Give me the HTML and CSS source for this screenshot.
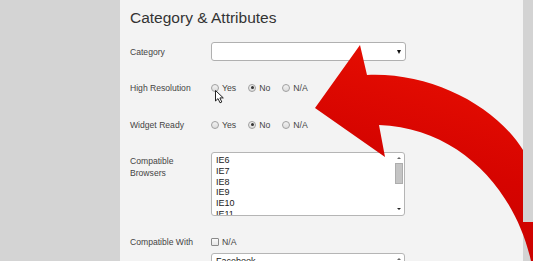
FILE: index.html
```html
<!DOCTYPE html>
<html>
<head>
<meta charset="utf-8">
<link rel="stylesheet" href="styles.css">
</head>
<body>
<div class="page">
  <div class="gutter"></div>
  <div class="panel">
    <h1 class="title">Category &amp; Attributes</h1>

    <div class="row row-cat">
      <div class="label">Category</div>
      <div class="select"><span class="caret"></span></div>
    </div>

    <div class="row row-radio row-hr">
      <div class="label">High Resolution</div>
      <div class="radios">
        <span class="opt"><span class="radio"></span>Yes</span>
        <span class="opt"><span class="radio checked"></span>No</span>
        <span class="opt"><span class="radio"></span>N/A</span>
      </div>
    </div>

    <div class="row row-radio row-wr">
      <div class="label">Widget Ready</div>
      <div class="radios">
        <span class="opt"><span class="radio"></span>Yes</span>
        <span class="opt"><span class="radio checked"></span>No</span>
        <span class="opt"><span class="radio"></span>N/A</span>
      </div>
    </div>

    <div class="row row-top row-browsers">
      <div class="label label-top">Compatible<br>Browsers</div>
      <div class="listbox">
        <div class="items">
          <div>IE6</div>
          <div>IE7</div>
          <div>IE8</div>
          <div>IE9</div>
          <div>IE10</div>
          <div>IE11</div>
        </div>
        <div class="scrollbar">
          <span class="sb-up"></span>
          <span class="sb-thumb"></span>
          <span class="sb-fill"></span>
          <span class="sb-down"></span>
        </div>
      </div>
    </div>

    <div class="row row-top row-with">
      <div class="label label-with">Compatible With</div>
      <div class="control-col">
        <div class="checkline"><span class="checkbox"></span>N/A</div>
        <div class="listbox listbox-fb">
          <div class="items"><div>Facebook</div><div>Twitter</div></div>
          <div class="scrollbar"><span class="sb-up"></span></div>
        </div>
      </div>
    </div>
  </div>
  <div class="strip"></div>

  <svg class="arrow" width="533" height="261" viewBox="0 0 533 261">
    <defs>
      <linearGradient id="red" x1="0.55" y1="0" x2="0.25" y2="1">
        <stop offset="0" stop-color="#e80f02"/>
        <stop offset="0.5" stop-color="#d60400"/>
        <stop offset="1" stop-color="#c50000"/>
      </linearGradient>
    </defs>
    <path fill="url(#red)" d="M315 108 L360 45 L367 75 C430 72 495 105 523 150 L523 222 L545 222 L545 261 L531 261 C515 190 460 128 379 125 L385 157 Z"/>
  </svg>

  <svg class="cursor" width="11" height="14" viewBox="0 0 11 14">
    <path d="M0.5 0.5 L0.5 11 L3 8.6 L5 12.8 L6.8 12 L4.9 7.9 L8.3 7.9 Z" fill="#fff" stroke="#222" stroke-width="1" stroke-linejoin="round"/>
  </svg>
</div>
</body>
</html>
```

FILE: styles.css
```css
html, body {
  margin: 0;
  padding: 0;
}

body {
  background: #d4d4d4;
  font-family: "Liberation Sans", Arial, sans-serif;
  overflow: hidden;
}

.page {
  position: relative;
  display: flex;
  width: 533px;
  height: 261px;
  overflow: hidden;
}

.gutter {
  width: 120px;
  flex: none;
  background: #d4d4d4;
}

.panel {
  width: 393px;
  flex: none;
  padding-left: 10px;
  background: #f3f3f3;
}

.strip {
  flex: 1;
  background: #d3d3d3;
}

.title {
  margin: 0;
  padding-top: 9px;
  font-size: 15.5px;
  line-height: 18px;
  font-weight: normal;
  color: #333;
}

.row {
  display: flex;
  align-items: center;
  min-height: 19px;
}

.row-top {
  align-items: flex-start;
}

.row-cat { margin-top: 15px; }
.row-hr { margin-top: 17px; }
.row-wr { margin-top: 18px; }
.row-browsers { margin-top: 18px; }
.row-with { margin-top: 18px; }

.label {
  width: 81px;
  flex: none;
  font-size: 8.6px;
  line-height: 12px;
  color: #444;
}

.label-top {
  padding-top: 3px;
}

.label-with {
  padding-top: 1.5px;
}

.select {
  width: 192px;
  height: 17px;
  border: 1px solid #b0b0b0;
  border-radius: 3px;
  background: #fff;
  display: flex;
  align-items: center;
  justify-content: flex-end;
  padding-right: 1px;
}

.caret {
  width: 0;
  height: 0;
  border-left: 2.5px solid transparent;
  border-right: 2.5px solid transparent;
  border-top: 4px solid #111;
  margin-right: 3px;
}

.radios {
  display: flex;
  align-items: center;
  gap: 12px;
  font-size: 8.7px;
  color: #444;
}

.opt {
  display: flex;
  align-items: center;
  gap: 3px;
}

.radio {
  width: 6px;
  height: 6px;
  border: 1px solid #a0a0a0;
  border-radius: 50%;
  background: linear-gradient(#f2f2f2, #dcdcdc);
  display: flex;
  align-items: center;
  justify-content: center;
}

.radio.checked::after {
  content: "";
  width: 3px;
  height: 3px;
  border-radius: 50%;
  background: #333;
}

.listbox {
  width: 192px;
  height: 62px;
  border: 1px solid #b5b5b5;
  border-radius: 3px;
  background: #fff;
  display: flex;
  overflow: hidden;
}

.items {
  flex: 1;
  padding: 2px 0 0 4px;
  font-size: 9px;
  line-height: 10.8px;
  color: #222;
  overflow: hidden;
}

.scrollbar {
  width: 10px;
  flex: none;
  display: flex;
  flex-direction: column;
  align-items: center;
}

.sb-up {
  margin-top: 4px;
  width: 0;
  height: 0;
  border-left: 2px solid transparent;
  border-right: 2px solid transparent;
  border-bottom: 2.5px solid #666;
}

.sb-thumb {
  margin-top: 4px;
  width: 6px;
  height: 19px;
  background: #c4c4c4;
  border: 1px solid #adadad;
  margin-right: 1px;
}

.sb-fill {
  flex: 1;
}

.sb-down {
  margin-bottom: 5px;
  width: 0;
  height: 0;
  border-left: 2px solid transparent;
  border-right: 2px solid transparent;
  border-top: 2.5px solid #222;
}

.control-col {
  display: flex;
  flex-direction: column;
}

.checkline {
  height: 15px;
  display: flex;
  align-items: center;
  gap: 3px;
  font-size: 8.7px;
  color: #444;
}

.checkbox {
  width: 6px;
  height: 6px;
  border: 1px solid #8a8a8a;
  border-radius: 1px;
  background: linear-gradient(#fafafa, #e6e6e6);
}

.listbox-fb {
  margin-top: 4px;
  height: 40px;
}

.arrow {
  position: absolute;
  left: 0;
  top: 0;
  pointer-events: none;
}

.cursor {
  position: absolute;
  left: 215px;
  top: 90px;
}
```
